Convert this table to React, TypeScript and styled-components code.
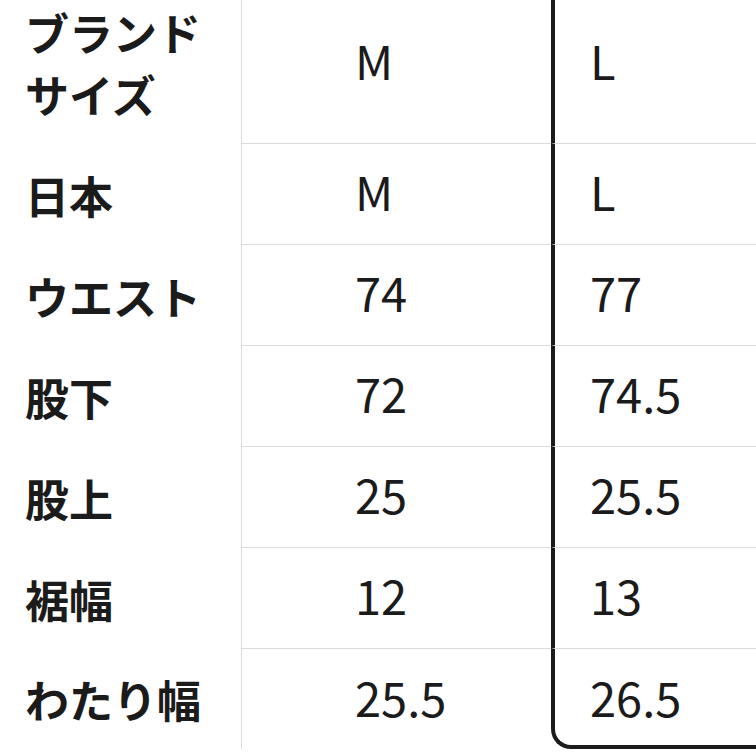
import React from "react";
import styled, { createGlobalStyle } from "styled-components";

const Global = createGlobalStyle`
  html, body { margin: 0; padding: 0; background: #ffffff; overflow: hidden; }
  body { font-family: "Noto Sans CJK JP", "Noto Sans", sans-serif; color: #1b1b1b; }
`;

const Table = styled.div`
  display: flex;
  flex-direction: column;
  margin-top: -18px;
  width: 756px;
`;

const Row = styled.div`
  display: flex;
  align-items: stretch;
`;

const Label = styled.div`
  flex: 0 0 216px;
  padding: 19px 0 19px 25px;
  border-right: 1px solid #dcdcdc;
  font-size: 44px;
  font-weight: 700;
  line-height: 62px;
  display: flex;
  align-items: center;
`;

const Value = styled.div<{ $highlight?: boolean; $last?: boolean }>`
  box-sizing: border-box;
  display: flex;
  align-items: center;
  font-size: 47px;
  font-weight: 400;
  line-height: 62px;
  padding-top: 16px;
  padding-bottom: ${(p) => (p.$last ? "21px" : "22px")};
  border-bottom: ${(p) => (p.$last ? (p.$highlight ? "4px solid #1b1b1b" : "0") : "1px solid #dcdcdc")};
  ${(p) =>
    p.$highlight
      ? `
    flex: 1 1 auto;
    padding-left: 35px;
    border-left: 4px solid #1b1b1b;
    ${p.$last ? "border-bottom-left-radius: 20px; padding-bottom: 17px;" : ""}
  `
      : `
    flex: 0 0 309px;
    padding-left: 113px;
  `}
`;

const rows: [React.ReactNode, string, string][] = [
  [<>ブランド<br />サイズ</>, "M", "L"],
  ["日本", "M", "L"],
  ["ウエスト", "74", "77"],
  ["股下", "72", "74.5"],
  ["股上", "25", "25.5"],
  ["裾幅", "12", "13"],
  ["わたり幅", "25.5", "26.5"],
];

export default function App() {
  return (
    <>
      <Global />
      <Table>
        {rows.map(([label, m, l], i) => {
          const last = i === rows.length - 1;
          return (
            <Row key={i}>
              <Label>{label}</Label>
              <Value $last={last}>{m}</Value>
              <Value $highlight $last={last}>{l}</Value>
            </Row>
          );
        })}
      </Table>
    </>
  );
}
